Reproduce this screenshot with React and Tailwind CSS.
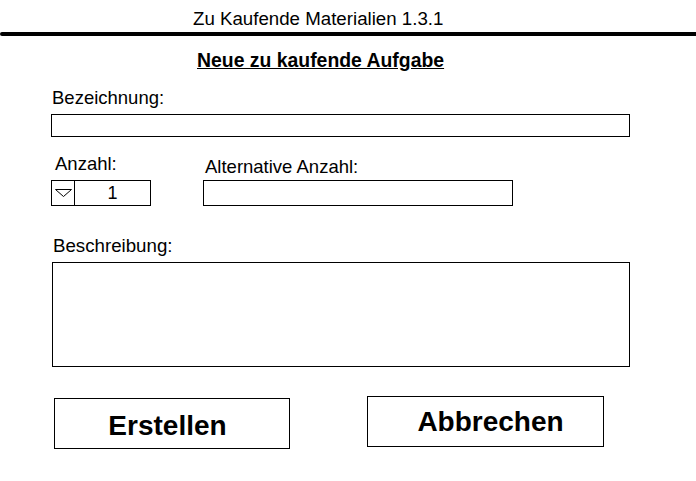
import React from "react";

export default function App() {
  return (
    <div
      className="w-[696px] h-[481px] bg-white text-black overflow-hidden"
      style={{ fontFamily: '"Liberation Sans", Arial, sans-serif' }}
    >
      <div className="pt-[8px] pl-[193px] h-[29px] text-[18.7px] leading-[21px] whitespace-nowrap">
        Zu Kaufende Materialien 1.3.1
      </div>
      <div className="mt-[3px] h-[4px] bg-black rounded-l-full" />
      <div className="mt-[14px] pl-[197px] font-bold text-[19.4px] leading-[21px] underline whitespace-nowrap">
        Neue zu kaufende Aufgabe
      </div>

      <div className="mt-[16px] pl-[52px] text-[18.5px] leading-[21px]">Bezeichnung:</div>
      <div className="mt-[6px] ml-[51px] w-[579px] h-[23px] border border-black" />

      <div className="flex items-start">
        <div className="ml-[51px] w-[100px] flex flex-col">
          <div className="mt-[16px] pl-[4px] text-[18.5px] leading-[21px]">Anzahl:</div>
          <div className="mt-[6px] h-[26px] w-[100px] border border-black flex">
            <div className="w-[23px] h-full border-r border-black flex items-center justify-center">
              <svg width="17" height="8" viewBox="0 0 17 8">
                <path d="M0.5 0.5 H16.5 L8.5 7.5 Z" fill="none" stroke="#000" strokeWidth="1" />
              </svg>
            </div>
            <div className="flex-1 flex items-center justify-center text-[18px] leading-none">1</div>
          </div>
        </div>
        <div className="ml-[52px] w-[310px] flex flex-col">
          <div className="mt-[19px] pl-[2px] text-[18.5px] leading-[21px] whitespace-nowrap">
            Alternative Anzahl:
          </div>
          <div className="mt-[3px] h-[26px] w-[310px] border border-black" />
        </div>
      </div>

      <div className="mt-[29px] pl-[53px] text-[18.7px] leading-[21px]">Beschreibung:</div>
      <div className="mt-[6px] ml-[52px] w-[578px] h-[105px] border border-black" />

      <div className="flex items-start">
        <button className="mt-[31px] ml-[54px] w-[236px] h-[51px] border border-black bg-white flex items-center justify-center pr-[9px] pt-[4px] font-bold text-[28px] leading-none">
          Erstellen
        </button>
        <button className="mt-[29px] ml-[77px] w-[237px] h-[51px] border border-black bg-white flex items-center justify-center pl-[10px] font-bold text-[28px] leading-none">
          Abbrechen
        </button>
      </div>
    </div>
  );
}
